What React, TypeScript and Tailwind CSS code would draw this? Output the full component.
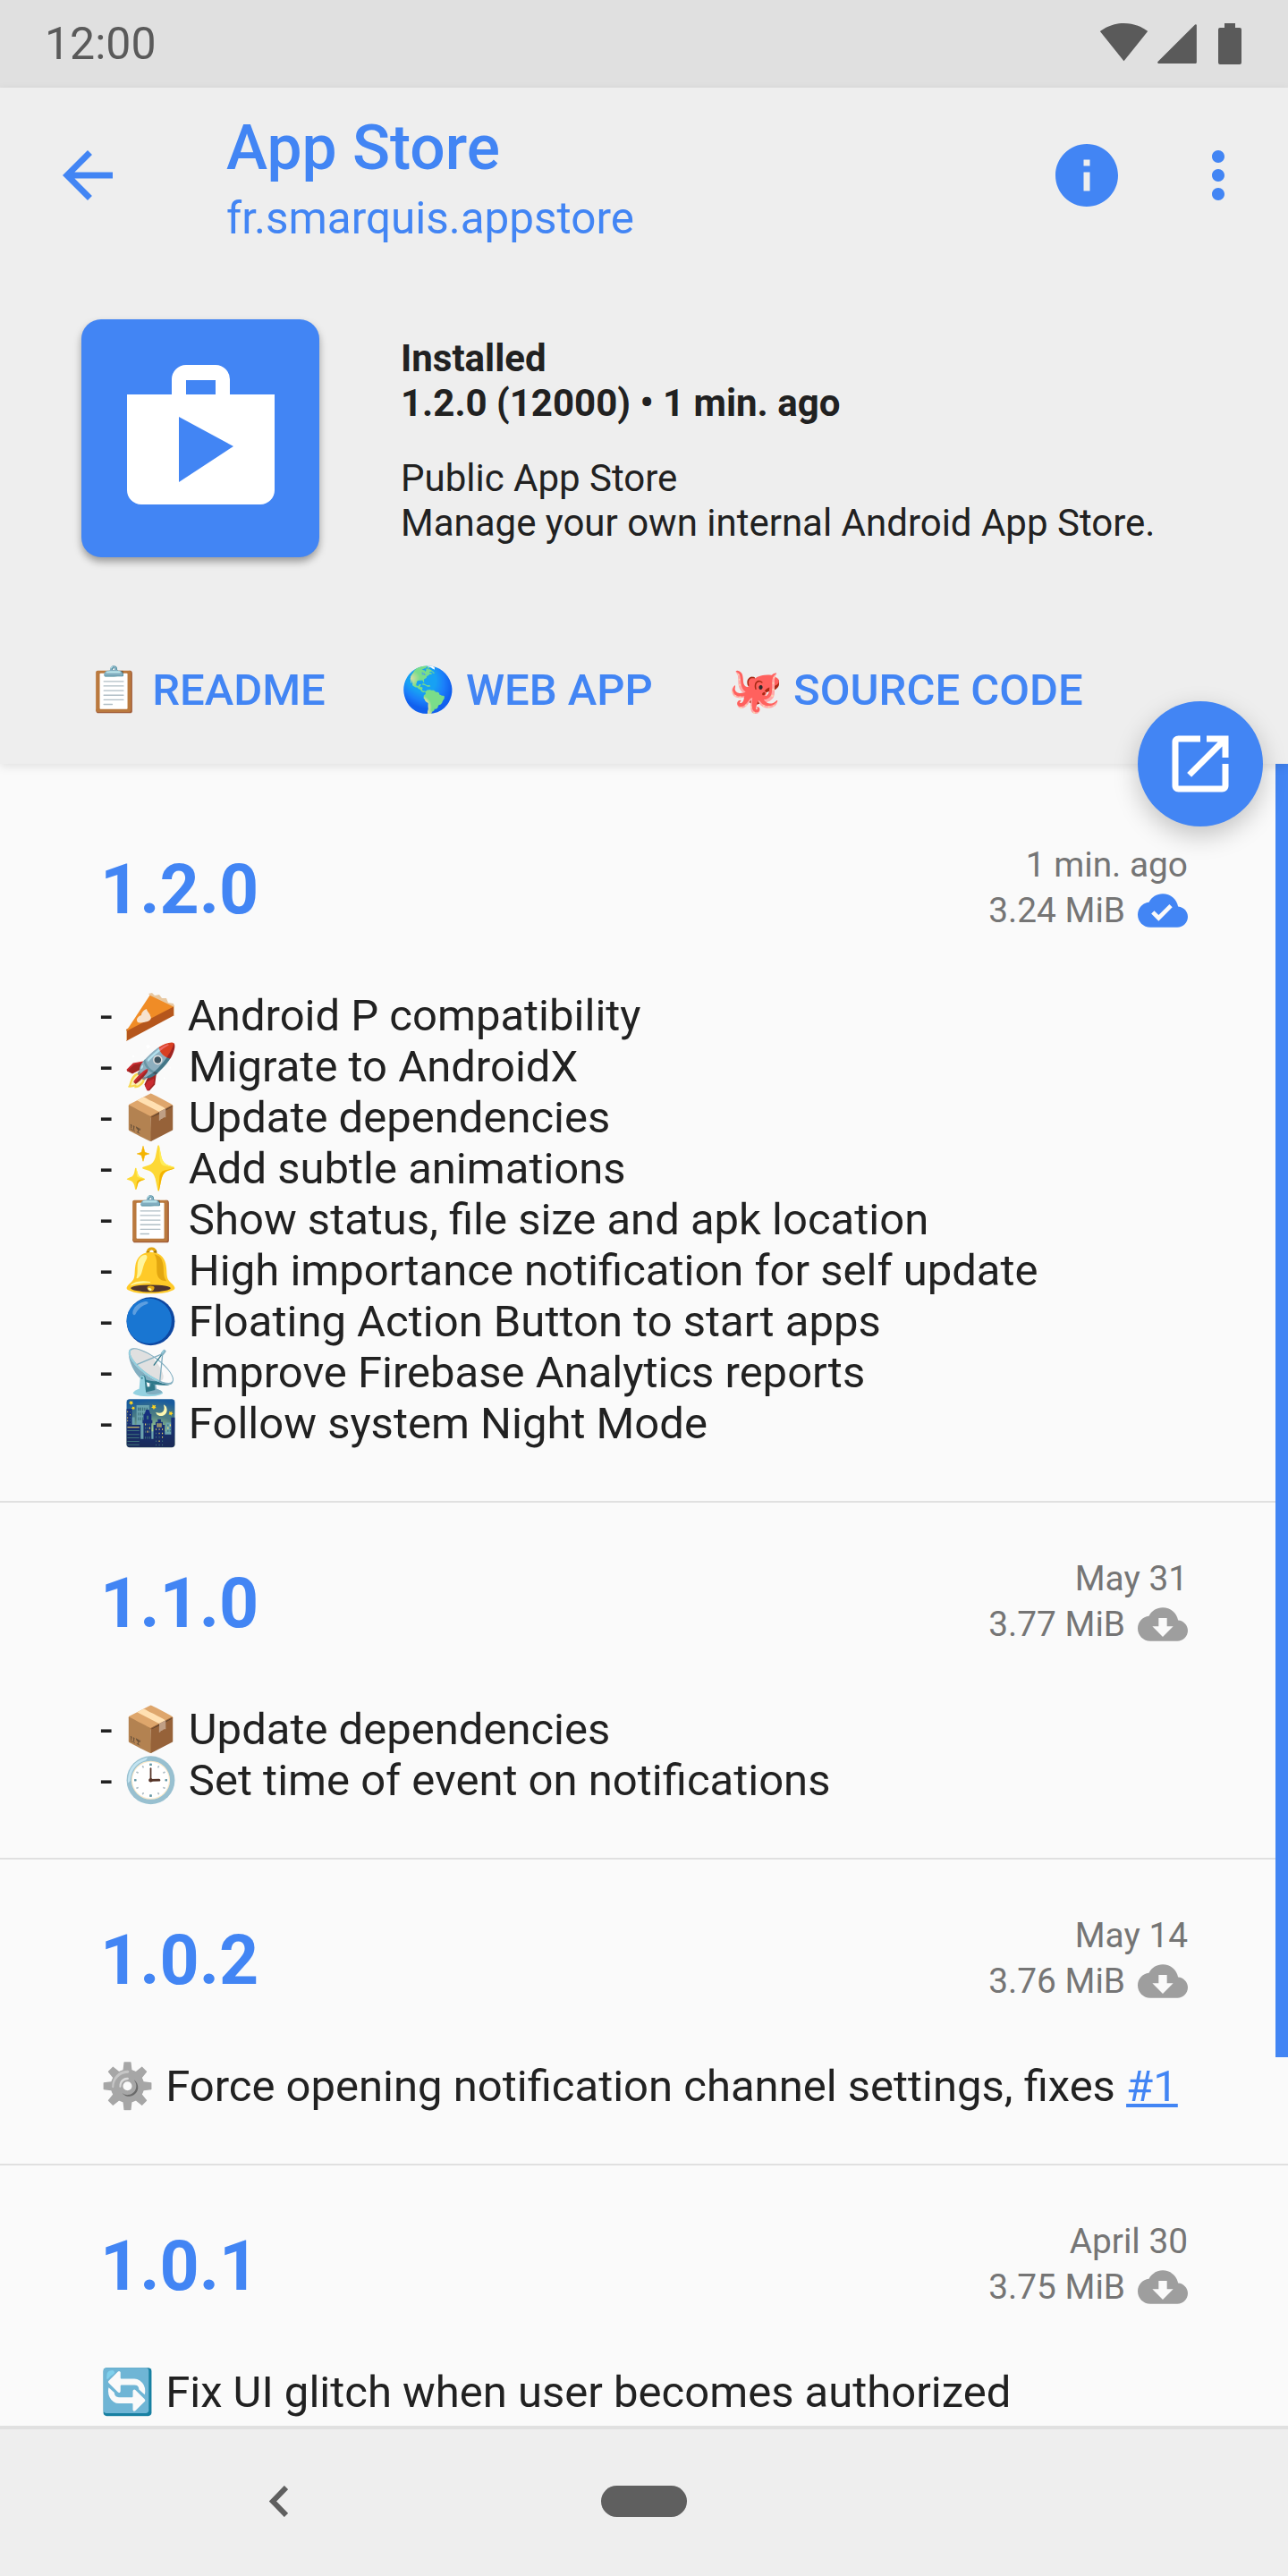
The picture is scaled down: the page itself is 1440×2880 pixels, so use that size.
import React from 'react';

const BLUE = '#4285f4';

const cloud =
  'M19.35 10.04C18.67 6.59 15.64 4 12 4 9.11 4 6.6 5.64 5.35 8.04 2.34 8.36 0 10.91 0 14c0 3.31 2.69 6 6 6h13c2.76 0 5-2.24 5-5 0-2.64-2.05-4.78-4.65-4.96z';

const CloudIcon = ({ installed }: { installed?: boolean }) => (
  <svg viewBox="0 0 24 24" className="w-[56px] h-[56px] ml-[14px]" fill={installed ? BLUE : '#9e9e9e'}>
    <path
      d={
        cloud +
        (installed
          ? 'M10 17l-3.5-3.5 1.41-1.41L10 14.17 15.18 9l1.41 1.41L10 17z'
          : 'M17 13l-5 5-5-5h3V9h4v4h3z')
      }
    />
  </svg>
);

// the installed emoji font has a whole pie here, the reference shows a slice
const PieSlice = () => (
  <svg viewBox="0 0 60 60" className="inline-block w-[60px] h-[60px] align-[-15px]" role="img" aria-label="pie">
    <path d="M3 44v13l54-29V17z" fill="#b5561c" />
    <path d="M3 46L30 5l27 13z" fill="#f08c26" />
    <path d="M28 4l4-1 3 3 5-1 3 4 5 0 2 5 6 1 1 4-27-13z" fill="#e8c8a0" />
    <path d="M3 57v-13l1 2v10z" fill="#e8c8a0" />
    <path d="M57 17v11l-1 .5v-11z" fill="#e8c8a0" />
    <path d="M16 36c-3-4 1-7 4-8 0-3 3-6 6-7 0 3 4 5 4 8 2 2 0 5-3 6-4 1-8 2-11 1z" fill="#f7e3cf" />
  </svg>
);

const releases = [
  {
    version: '1.2.0',
    date: '1 min. ago',
    size: '3.24 MiB',
    installed: true,
    lines: [
      <>
        - <PieSlice /> Android P compatibility
      </>,
      '- 🚀 Migrate to AndroidX',
      '- 📦 Update dependencies',
      '- ✨ Add subtle animations',
      '- 📋 Show status, file size and apk location',
      '- 🔔 High importance notification for self update',
      '- 🔵 Floating Action Button to start apps',
      '- 📡 Improve Firebase Analytics reports',
      '- 🌃 Follow system Night Mode',
    ],
  },
  {
    version: '1.1.0',
    date: 'May 31',
    size: '3.77 MiB',
    lines: ['- 📦 Update dependencies', '- 🕒 Set time of event on notifications'],
  },
  {
    version: '1.0.2',
    date: 'May 14',
    size: '3.76 MiB',
    lines: [
      <>
        <span className="grayscale">⚙️</span> Force opening notification channel settings, fixes{' '}
        <span className="text-[#4285f4] underline">#1</span>
      </>,
    ],
  },
  {
    version: '1.0.1',
    date: 'April 30',
    size: '3.75 MiB',
    lines: [
      <>
        <span className="saturate-200">🔄</span> Fix UI glitch when user becomes authorized
      </>,
    ],
  },
];

const links = [
  { emoji: '📋', label: 'README' },
  { emoji: '🌎', label: 'WEB APP' },
  { emoji: '🐙', label: 'SOURCE CODE' },
];

function StatusBar() {
  return (
    <div className="h-[98px] shrink-0 bg-[#e0e0e0] flex items-center pl-[50px] text-[#5a5a5a]">
      <span className="text-[50px] leading-[57px]">12:00</span>
      <svg viewBox="0 0 24 24" className="w-[55px] h-[55px] ml-auto mb-[6px]" fill="#5a5a5a">
        <path d="M12.01 21.49L23.64 7c-.45-.34-4.93-4-11.64-4C5.28 3 .81 6.66.36 7l11.63 14.49.01.01.01-.01z" />
      </svg>
      <svg viewBox="0 0 24 24" className="w-[50px] h-[50px] ml-[7px]" fill="#5a5a5a">
        <path d="M2 22h20V2z" stroke="#5a5a5a" strokeLinejoin="round" />
      </svg>
      <svg viewBox="0 0 26 46" className="w-[26px] h-[46px] ml-[21px] mr-[52px]" fill="#5a5a5a">
        <path d="M7 0h12v5h5a2 2 0 0 1 2 2v37a2 2 0 0 1-2 2H2a2 2 0 0 1-2-2V7a2 2 0 0 1 2-2h5z" />
      </svg>
    </div>
  );
}

function Header() {
  return (
    <div className="relative z-10 h-[756px] shrink-0 bg-[#eeeeee] shadow-[0_3px_10px_rgba(0,0,0,0.1)]">
      <div className="flex items-center h-[196px] pl-[56px] pr-[36px]">
        <svg viewBox="0 0 24 24" className="w-[84px] h-[84px]" fill={BLUE}>
          <path d="M20 11H7.83l5.59-5.59L12 4l-8 8 8 8 1.41-1.41L7.83 13H20v-2z" />
        </svg>
        <div className="ml-[113px] pt-[6px] flex-1 text-[#4285f4]">
          <div className="text-[69.5px] leading-[82px] font-medium">App Store</div>
          <div className="mt-[9px] text-[49.4px] leading-[57px]">fr.smarquis.appstore</div>
        </div>
        <svg viewBox="0 0 24 24" className="w-[84px] h-[84px]" fill={BLUE}>
          <path d="M12 2C6.48 2 2 6.48 2 12s4.48 10 10 10 10-4.48 10-10S17.52 2 12 2zm1 15h-2v-6h2v6zm0-8h-2V7h2v2z" />
        </svg>
        <svg viewBox="0 0 24 24" className="w-[84px] h-[84px] ml-[63px]" fill={BLUE}>
          <path d="M12 8c1.1 0 2-.9 2-2s-.9-2-2-2-2 .9-2 2 .9 2 2 2zm0 2c-1.1 0-2 .9-2 2s.9 2 2 2 2-.9 2-2-.9-2-2-2zm0 6c-1.1 0-2 .9-2 2s.9 2 2 2 2-.9 2-2-.9-2-2-2z" />
        </svg>
      </div>

      <div className="flex items-start mt-[63px] pl-[91px]">
        <div className="w-[266px] h-[266px] rounded-[22px] bg-[#4285f4] shadow-[0_5px_9px_rgba(0,0,0,0.35)] shrink-0">
          <svg viewBox="0 0 266 266" className="w-full h-full">
            <path
              fill="#fff"
              fillRule="evenodd"
              d="M51 84h50V67a16 16 0 0 1 16-16h33a16 16 0 0 1 16 16v17h50v107a16 16 0 0 1-16 16H67a16 16 0 0 1-16-16zM117 68v16h33V68zM109 109v73l61-40z"
            />
          </svg>
        </div>
        <div className="ml-[91px] mt-[19px] text-[42px] leading-[49.5px] text-[#212121]">
          <div className="font-bold">Installed</div>
          <div className="font-bold">1.2.0 (12000) • 1 min. ago</div>
          <div className="mt-[35px]">Public App Store</div>
          <div>Manage your own internal Android App Store.</div>
        </div>
      </div>

      <div className="flex mt-[120px] pl-[97px] gap-[84px] text-[49px] leading-[57px] font-medium text-[#4285f4]">
        {links.map((l) => (
          <span key={l.label}>
            {l.emoji} {l.label}
          </span>
        ))}
      </div>

      <div className="absolute right-[28px] bottom-[-70px] w-[140px] h-[140px] rounded-full bg-[#4285f4] shadow-[0_10px_28px_rgba(0,0,0,0.22)] flex items-center justify-center">
        <svg viewBox="0 0 24 24" className="w-[84px] h-[84px]" fill="#fff">
          <path d="M19 19H5V5h7V3H5c-1.11 0-2 .9-2 2v14c0 1.1.89 2 2 2h14c1.1 0 2-.9 2-2v-7h-2v7zM14 3v2h3.59l-9.83 9.83 1.41 1.41L19 6.41V10h2V3h-7z" />
        </svg>
      </div>
    </div>
  );
}

function ReleaseList() {
  return (
    <div className="relative flex-1 min-h-0 overflow-hidden bg-[#fafafa]">
      <div className="absolute top-0 right-0 w-[14px] h-[1446px] bg-[#4285f4]" />
      {releases.map((r, i) => (
        <div
          key={r.version}
          className={`px-[112px] pb-[58px] border-b-2 border-[#e0e0e0] ${i === 0 ? 'pt-[88px]' : 'pt-[60px]'}`}
        >
          <div className="flex items-center justify-between">
            <span className="pt-[3px] text-[77px] leading-[90px] font-bold text-[#4285f4]">{r.version}</span>
            <div className="flex flex-col items-end text-[38.8px] text-[#757575]">
              <span className="leading-[49px]">{r.date}</span>
              <div className="flex items-center h-[54px]">
                {r.size}
                <CloudIcon installed={r.installed} />
              </div>
            </div>
          </div>
          <div className="mt-[62px] text-[49px] leading-[57px] text-[#212121]">
            {r.lines.map((l, j) => (
              <div key={j} className="whitespace-pre-wrap h-[57px]">
                {l}
              </div>
            ))}
          </div>
        </div>
      ))}
    </div>
  );
}

function NavBar() {
  return (
    <div className="h-[168px] shrink-0 bg-[#eeeeee] border-t-4 border-[#e0e0e0] flex items-center pl-[301px] pb-[4px]">
      <svg viewBox="0 0 21 35" className="w-[21px] h-[35px]" fill="none" stroke="#5f5f5f" strokeWidth="6">
        <path d="M19 2L4 17.5 19 33" />
      </svg>
      <div className="ml-[350px] w-[96px] h-[35px] rounded-full bg-[#5f5f5f]" />
    </div>
  );
}

export default function App() {
  return (
    <div className="w-[1440px] h-[2880px] flex flex-col overflow-hidden font-['Roboto',sans-serif]">
      <StatusBar />
      <Header />
      <ReleaseList />
      <NavBar />
    </div>
  );
}
